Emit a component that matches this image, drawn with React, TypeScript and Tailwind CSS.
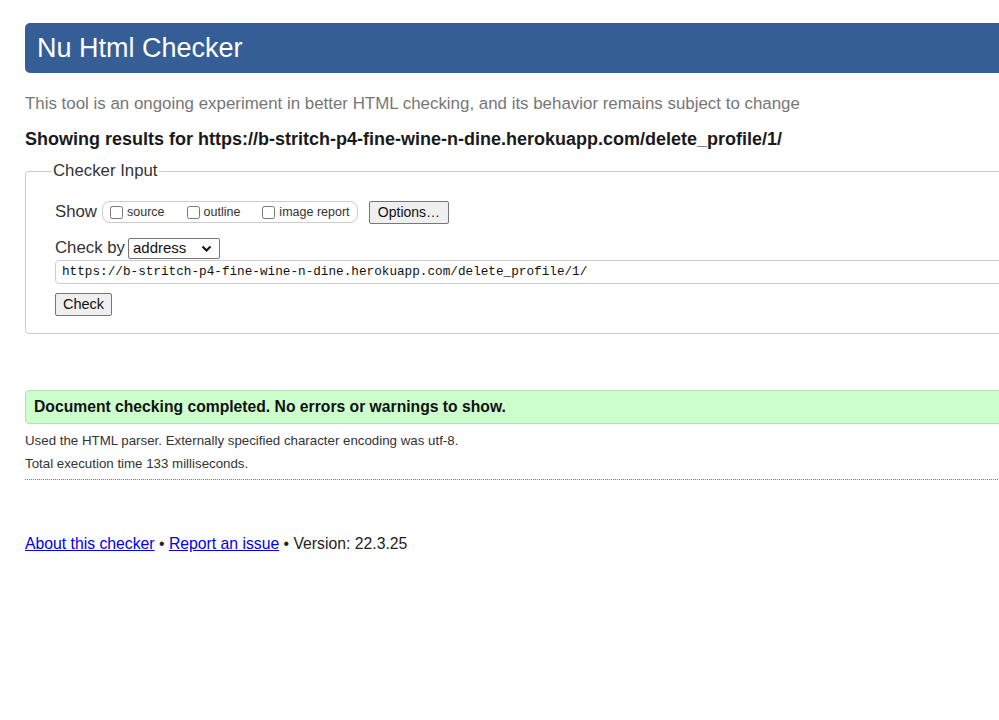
export default function App() {
  const url = "https://b-stritch-p4-fine-wine-n-dine.herokuapp.com/delete_profile/1/";

  return (
    <div className="min-h-[720px] w-full overflow-hidden bg-white font-['Liberation_Sans',Arial,sans-serif] text-[#222]">
      <div className="w-[1200px] pl-[25px] pt-[23px]">
        <h1 className="flex h-[50px] items-center rounded-[5px] bg-[#365e96] pl-[12px] text-[27px] leading-none font-normal text-white">
          Nu Html Checker
        </h1>

        <p className="mt-[21px] h-[19px] text-[16.9px] leading-[19px] text-[#767676]">
          This tool is an ongoing experiment in better HTML checking, and its behavior remains subject to change
        </p>

        <p className="mt-[16px] h-[20px] text-[18px] leading-[20px] font-bold text-[#1a1a1a]">
          Showing results for {url}
        </p>

        <fieldset className="mt-[13px] h-[172px] rounded-[4px] border border-[#cccccc] pr-0 pl-[29px]">
          <legend className="-ml-[3px] px-[1px] text-[16.8px] leading-[18px] text-[#333]">Checker Input</legend>

          <div className="mt-[21px] flex h-[22px] items-center">
            <span className="text-[16.8px] text-[#333]">Show</span>
            <div className="ml-[5px] flex h-[22px] w-[256px] items-center rounded-[8px] border border-[#cccccc] pl-[7px] text-[12.5px] text-[#333]">
              <label className="flex items-center">
                <input type="checkbox" className="m-0 h-[13px] w-[13px]" />
                <span className="ml-[4px]">source</span>
              </label>
              <label className="ml-[22px] flex items-center">
                <input type="checkbox" className="m-0 h-[13px] w-[13px]" />
                <span className="ml-[4px]">outline</span>
              </label>
              <label className="ml-[22px] flex items-center">
                <input type="checkbox" className="m-0 h-[13px] w-[13px]" />
                <span className="ml-[4px]">image report</span>
              </label>
            </div>
            <button className="ml-[11px] h-[23px] w-[80px] rounded-[2px] border border-[#767676] bg-[#efefef] text-[14px] text-[#111]">
              Options…
            </button>
          </div>

          <div className="mt-[14px] flex h-[22px] items-center">
            <span className="text-[16.8px] text-[#333]">Check by</span>
            <div className="relative ml-[3px] flex h-[21px] w-[92px] items-center rounded-[2px] border border-[#767676] pl-[4px] text-[15px] text-[#111]">
              address
              <svg className="absolute top-[6px] right-[7px]" width="11" height="8" viewBox="0 0 11 8">
                <path d="M1.5 1.5 L5.5 5.5 L9.5 1.5" fill="none" stroke="#111" strokeWidth="2" />
              </svg>
            </div>
          </div>

          <div className="mt-[1px] flex h-[24px] items-center rounded-[4px] border border-[#cccccc] pl-[6px] font-['Liberation_Mono','DejaVu_Sans_Mono',monospace] text-[12.7px] text-[#111]">
            {url}
          </div>

          <button className="mt-[9px] h-[23px] w-[57px] rounded-[2px] border border-[#767676] bg-[#efefef] text-[14.5px] text-[#111]">
            Check
          </button>
        </fieldset>

        <div className="mt-[56px] flex h-[34px] items-center rounded-[4px] border border-[#b6deb6] bg-[#ccffcc] pl-[8px] text-[15.7px] font-bold text-[#111]">
          Document checking completed. No errors or warnings to show.
        </div>

        <p className="mt-[9px] h-[15px] text-[13.3px] leading-[15px] text-[#333]">
          Used the HTML parser. Externally specified character encoding was utf-8.
        </p>
        <p className="mt-[8px] h-[15px] text-[13.3px] leading-[15px] text-[#333]">Total execution time 133 milliseconds.</p>
        <div className="mt-[8px] border-t border-dotted border-[#777]" />

        <p className="mt-[55px] text-[15.75px] leading-[18px] text-[#222]">
          <a href="#" className="text-[#0000ee] underline">
            About this checker
          </a>{" "}
          •{" "}
          <a href="#" className="text-[#0000ee] underline">
            Report an issue
          </a>{" "}
          • Version: 22.3.25
        </p>
      </div>
    </div>
  );
}
